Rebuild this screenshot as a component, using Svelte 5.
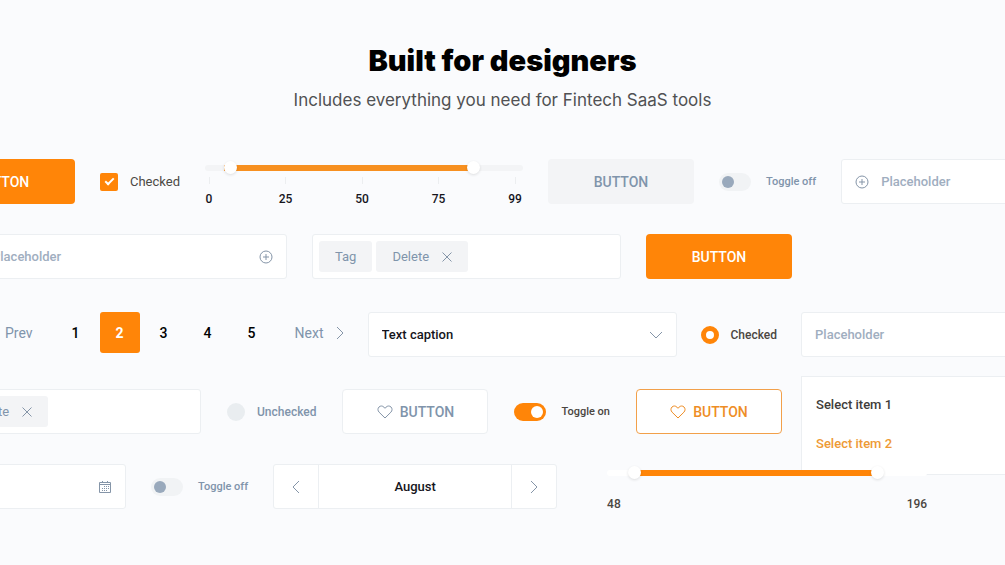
<script>
	let low = 6
	let high = 85
	let from = 58
	let to = 175
	let page = 2
	let month = 7

	const ticks = [0, 25, 50, 75, 99]
	const pages = [1, 2, 3, 4, 5]
	const months = ['January', 'February', 'March', 'April', 'May', 'June', 'July',
		'August', 'September', 'October', 'November', 'December']

	const percent = (value, min, max) => (value - min) / (max - min) * 100

	const stepMonth = (step) => {
		month = (month + step + 12) % 12
	}
</script>

<main>
	<header>
		<h1>Built for designers</h1>
		<p>Includes everything you need for Fintech SaaS tools</p>
	</header>

	<section class="row row-buttons">
		<button class="btn primary">BUTTON</button>
		<label class="option light">
			<input type="checkbox" class="check" checked>
			Checked
		</label>
		<div class="slider">
			<div class="range">
				<div class="track"></div>
				<div class="fill" style="margin-left: {percent(low, 0, 99)}%; width: {percent(high, 0, 99) - percent(low, 0, 99)}%"></div>
				<input type="range" min="0" max="99" bind:value={low} aria-label="Lowest value">
				<input type="range" min="0" max="99" bind:value={high} aria-label="Highest value">
			</div>
			<ul class="ticks">
				{#each ticks as tick (tick)}
					<li>{tick}</li>
				{/each}
			</ul>
		</div>
		<button class="btn muted">BUTTON</button>
		<label class="option small">
			<input type="checkbox" class="toggle">
			Toggle off
		</label>
		<label class="field grow">
			<svg class="plus" viewBox="0 0 14 14"><circle cx="7" cy="7" r="6" /><path d="M7 4v6M4 7h6" /></svg>
			<input type="text" placeholder="Placeholder" aria-label="Placeholder">
		</label>
	</section>

	<section class="row row-tags">
		<label class="field">
			<input type="text" placeholder="Placeholder" aria-label="Placeholder">
			<svg class="plus" viewBox="0 0 14 14"><circle cx="7" cy="7" r="6" /><path d="M7 4v6M4 7h6" /></svg>
		</label>
		<div class="field tags">
			<span class="tag">Tag</span>
			<button class="tag">Delete <svg class="cross" viewBox="0 0 10 10"><path d="M.5.5l9 9M9.500.5l-9 9" /></svg></button>
		</div>
		<button class="btn primary">BUTTON</button>
	</section>

	<section class="row row-pages">
		<nav>
			<button class="step"><svg class="chevron" viewBox="0 0 8 14"><path d="M7 1L1 7l6 6" /></svg> Prev</button>
			<div class="pages">
				{#each pages as number (number)}
					<button class="page" class:active={number === page} on:click={() => page = number}>{number}</button>
				{/each}
			</div>
			<button class="step">Next <svg class="chevron" viewBox="0 0 8 14"><path d="M1 1l6 6-6 6" /></svg></button>
		</nav>
		<div class="field dropdown">
			<select aria-label="Caption">
				<option>Text caption</option>
			</select>
			<svg class="down" viewBox="0 0 14 8"><path d="M1 1l6 6 6-6" /></svg>
		</div>
		<label class="option dark">
			<input type="radio" name="state" class="radio" checked>
			Checked
		</label>
		<div class="combo grow">
			<label class="field">
				<input type="text" placeholder="Placeholder" aria-label="Placeholder">
			</label>
			<div class="menu">
				<button>Select item 1</button>
				<button class="active">Select item 2</button>
			</div>
		</div>
	</section>

	<section class="row row-toggles">
		<div class="field tags">
			<span class="tag">Tag</span>
			<button class="tag">Delete <svg class="cross" viewBox="0 0 10 10"><path d="M.5.5l9 9M9.500.5l-9 9" /></svg></button>
		</div>
		<label class="option">
			<input type="radio" name="state" class="radio">
			Unchecked
		</label>
		<button class="btn plain">
			<svg class="heart" viewBox="0 0 16 14"><path d="M8 13L2.100 7.200C.6 5.700.6 3.400 2 2c1.400-1.400 3.600-1.300 4.900.1L8 3.300l1.100-1.200C10.400.7 12.600.6 14 2c1.400 1.400 1.400 3.700-.1 5.200z" /></svg>
			BUTTON
		</button>
		<label class="option small dark">
			<input type="checkbox" class="toggle" checked>
			Toggle on
		</label>
		<button class="btn outline">
			<svg class="heart" viewBox="0 0 16 14"><path d="M8 13L2.100 7.200C.6 5.700.6 3.400 2 2c1.400-1.400 3.600-1.300 4.900.1L8 3.300l1.100-1.200C10.400.7 12.600.6 14 2c1.400 1.400 1.400 3.700-.1 5.200z" /></svg>
			BUTTON
		</button>
	</section>

	<section class="row row-dates">
		<label class="field">
			<input type="text" aria-label="Date">
			<svg class="calendar" viewBox="0 0 12 12"><path d="M.5 1.500h11v10H.5zM.5 3.500h11M3.500 0v2M8.500 0v2" /><path class="days" d="M5 5.500h5M3 7.500h7M3 9.500h5" /></svg>
		</label>
		<label class="option small">
			<input type="checkbox" class="toggle">
			Toggle off
		</label>
		<div class="stepper">
			<button aria-label="Previous month" on:click={() => stepMonth(-1)}><svg class="chevron" viewBox="0 0 8 14"><path d="M7 1L1 7l6 6" /></svg></button>
			<span>{months[month]}</span>
			<button aria-label="Next month" on:click={() => stepMonth(1)}><svg class="chevron" viewBox="0 0 8 14"><path d="M1 1l6 6-6 6" /></svg></button>
		</div>
		<div class="slider wide">
			<div class="range">
				<div class="track"></div>
				<div class="fill" style="margin-left: {percent(from, 48, 196)}%; width: {percent(to, 48, 196) - percent(from, 48, 196)}%"></div>
				<input type="range" min="48" max="196" bind:value={from} aria-label="From">
				<input type="range" min="48" max="196" bind:value={to} aria-label="To">
			</div>
			<div class="ends"><span>48</span><span>196</span></div>
		</div>
	</section>
</main>

<style>
	:global(body) {
		background: #fafbfd;
	}
	main {
		--orange: #ff8508;
		--slate: #8094ab;
		--line: #eceff2;
		overflow: hidden;
		padding-bottom: 55px;
		font-family: Roboto, "Liberation Sans", sans-serif;
		font-size: 13px;
		font-weight: 500;
		line-height: 16px;
		color: #15151c;
	}
	header {
		padding: 42px 20px 47px;
		text-align: center;
		font-family: Inter, "Liberation Sans", sans-serif;
	}
	h1 {
		margin: 0;
		font-size: 29px;
		font-weight: 900;
		line-height: 38px;
		color: #000;
	}
	p {
		margin: 9px 0 0;
		font-size: 17px;
		font-weight: 400;
		line-height: 23px;
		color: #505153;
	}
	button, input, select {
		font: inherit;
		color: inherit;
		margin: 0;
		border: 0;
		padding: 0;
		background: none;
	}
	button {
		cursor: pointer;
	}
	svg {
		display: block;
		flex: none;
		fill: none;
		stroke: #8595a8;
		stroke-width: 1;
	}
	.row {
		display: flex;
		align-items: center;
		gap: 25px;
		height: 45px;
		margin-bottom: 30px;
	}
	.row > * {
		flex: none;
	}
	.row > .grow {
		flex: 1 0 200px;
		margin-right: -20px;
	}
	/* rows run past the left edge of the page */
	.row-buttons {
		margin-left: -71px;
	}
	.row-tags {
		margin-left: -22px;
		margin-bottom: 33px;
	}
	.row-pages {
		gap: 24px;
		margin-left: -15px;
		margin-bottom: 32px;
	}
	.row-toggles {
		gap: 26px;
		margin-left: -108px;
	}
	.row-dates {
		margin-left: -183px;
		margin-bottom: 0;
	}

	.btn {
		display: flex;
		align-items: center;
		justify-content: center;
		gap: 7px;
		box-sizing: border-box;
		width: 146px;
		height: 45px;
		border-radius: 4px;
		font-size: 14px;
	}
	.primary {
		background: var(--orange);
		color: #fff;
	}
	.muted {
		background: #f3f4f6;
		color: var(--slate);
	}
	.plain {
		background: #fff;
		border: 1px solid var(--line);
		color: var(--slate);
	}
	.outline {
		background: #fff;
		border: 1px solid #f2a04a;
		color: #ee8d25;
	}
	.outline svg {
		stroke: #ee8d25;
	}
	.heart {
		width: 16px;
		height: 14px;
	}

	.option {
		display: flex;
		align-items: center;
		gap: 12px;
		font-size: 12px;
		color: var(--slate);
	}
	.light {
		font-size: 13px;
		font-weight: 400;
		color: #4c4a45;
	}
	.dark {
		color: #4b4641;
	}
	.small {
		gap: 15px;
		font-size: 11px;
	}
	.check, .radio, .toggle {
		appearance: none;
		display: grid;
		box-sizing: border-box;
		width: 18px;
		height: 18px;
	}
	.check {
		place-items: center;
		border-radius: 2px;
		background: #e9edf0;
	}
	.check:checked {
		background: var(--orange);
	}
	.check:checked::after {
		content: "";
		width: 7px;
		height: 3px;
		margin-bottom: 3px;
		border: solid #fff;
		border-width: 0 0 2px 2px;
		transform: rotate(-45deg);
	}
	.radio {
		border-radius: 50%;
		background: #e9edf0;
	}
	.radio:checked {
		border: 5px solid var(--orange);
		background: #fff;
	}
	.toggle {
		width: 32px;
		padding: 3px;
		border-radius: 9px;
		background: #f1f3f5;
	}
	.toggle::after {
		content: "";
		width: 12px;
		height: 12px;
		border-radius: 50%;
		background: #99a9bc;
	}
	.toggle:checked {
		justify-items: end;
		background: var(--orange);
	}
	.toggle:checked::after {
		background: #fff;
	}

	.field {
		display: flex;
		align-items: center;
		gap: 12px;
		box-sizing: border-box;
		width: 309px;
		height: 45px;
		padding: 0 13px;
		border: 1px solid var(--line);
		border-radius: 3px;
		background: #fff;
	}
	.field input, .field select {
		flex: 1;
		min-width: 0;
		height: 100%;
		outline: none;
	}
	.field input::placeholder {
		color: #a0aebf;
		opacity: 1;
	}
	.plus {
		width: 14px;
		height: 14px;
	}
	.tags {
		gap: 4px;
		padding: 0 6px;
	}
	.tag {
		display: flex;
		align-items: center;
		gap: 13px;
		height: 31px;
		padding: 0 16px;
		border-radius: 3px;
		background: #f3f4f6;
		font-weight: 400;
		color: var(--slate);
	}
	.cross {
		width: 10px;
		height: 10px;
	}
	.dropdown select {
		appearance: none;
	}
	.down {
		width: 14px;
		height: 8px;
	}
	.calendar {
		width: 12px;
		height: 12px;
		margin-right: 1px;
	}
	.days {
		stroke-dasharray: 1 1;
	}

	nav {
		display: flex;
		align-items: center;
		align-self: flex-start;
		gap: 23px;
	}
	.pages {
		display: flex;
		gap: 4px;
	}
	.page {
		width: 40px;
		height: 41px;
		border-radius: 3px;
		font-size: 14px;
		color: #000;
	}
	.page.active {
		background: var(--orange);
		color: #fff;
		font-weight: 700;
	}
	.step {
		display: flex;
		align-items: center;
		gap: 12px;
		font-size: 14px;
		font-weight: 400;
		color: var(--slate);
	}
	.chevron {
		width: 8px;
		height: 14px;
	}

	.combo {
		position: relative;
	}
	.combo .field {
		width: 100%;
	}
	.menu {
		position: absolute;
		top: 64px;
		left: 0;
		display: grid;
		gap: 23px;
		box-sizing: border-box;
		width: 100%;
		padding: 20px 14px 22px;
		border: 1px solid var(--line);
		background: #fff;
	}
	.menu button {
		text-align: left;
		color: #403c3a;
	}
	.menu .active {
		color: #ee9a35;
	}

	.slider {
		width: 318px;
		align-self: flex-start;
		padding-top: 2px;
		font-size: 12px;
	}
	.range {
		display: grid;
		align-items: center;
		height: 13px;
	}
	.range > * {
		grid-area: 1 / 1;
	}
	.track {
		height: 6px;
		border-radius: 3px;
		background: #f3f4f6;
	}
	.fill {
		height: 6px;
		background: #f79020;
	}
	.range input {
		appearance: none;
		width: 100%;
		height: 13px;
		pointer-events: none;
	}
	.range input::-webkit-slider-thumb {
		appearance: none;
		width: 13px;
		height: 13px;
		border-radius: 50%;
		background: #fff;
		box-shadow: 0 1px 3px #0000001f;
		pointer-events: auto;
	}
	.ticks {
		display: flex;
		justify-content: space-between;
		margin: 3px 0 0;
		padding: 0 4px 0 0;
		list-style: none;
	}
	.ticks li {
		display: flex;
		flex-direction: column;
		align-items: center;
		gap: 7px;
		width: 8px;
	}
	.ticks li::before {
		content: "";
		width: 1px;
		height: 7px;
		background: #eceef0;
	}
	.wide {
		position: relative;
		width: 320px;
		margin-left: 25px;
	}
	.wide .track {
		background: #fff;
	}
	.wide .fill {
		background: var(--orange);
	}
	.ends {
		display: flex;
		justify-content: space-between;
		margin-top: 17px;
		color: #4b4641;
	}

	.stepper {
		display: grid;
		grid-template-columns: 44px 194px 44px;
		box-sizing: border-box;
		height: 45px;
		border: 1px solid var(--line);
		border-radius: 3px;
		background: #fff;
	}
	.stepper > * {
		display: grid;
		place-items: center;
	}
	.stepper span {
		border: solid var(--line);
		border-width: 0 1px;
	}
</style>
